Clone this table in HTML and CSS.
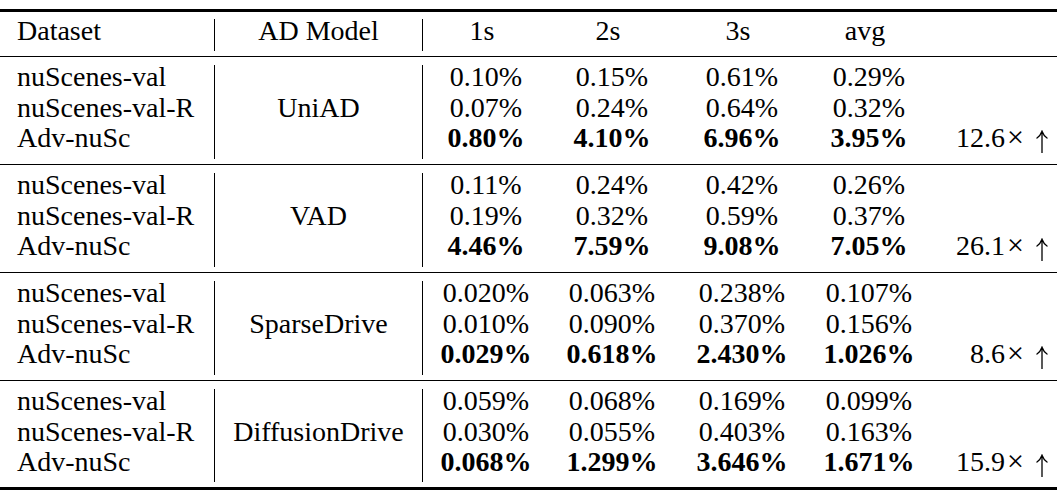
FILE: index.html
```html
<!DOCTYPE html>
<html>
<head>
<meta charset="utf-8">
<link rel="stylesheet" href="styles.css">
</head>
<body>
<div class="table">
  <div class="row head">
    <div class="cell c-ds">Dataset</div>
    <div class="sep"></div>
    <div class="cell c-model">AD Model</div>
    <div class="sep"></div>
    <div class="cell num">1s</div>
    <div class="cell num">2s</div>
    <div class="cell num">3s</div>
    <div class="cell num">avg</div>
    <div class="cell last"></div>
  </div>

  <div class="row group">
    <div class="cell c-ds"><div>nuScenes-val</div><div>nuScenes-val-R</div><div>Adv-nuSc</div></div>
    <div class="sep"></div>
    <div class="cell c-model">UniAD</div>
    <div class="sep"></div>
    <div class="cell num"><div>0.10%</div><div>0.07%</div><div class="b">0.80%</div></div>
    <div class="cell num"><div>0.15%</div><div>0.24%</div><div class="b">4.10%</div></div>
    <div class="cell num"><div>0.61%</div><div>0.64%</div><div class="b">6.96%</div></div>
    <div class="cell num"><div>0.29%</div><div>0.32%</div><div class="b">3.95%</div></div>
    <div class="cell last"><span>12.6<span class="times">×</span><svg class="up" viewBox="0 0 12 23" width="12" height="23"><path d="M6 1.5V23M1 8C3.2 6.4 5 4 6 1.2C7 4 8.8 6.4 11 8"/></svg></span></div>
  </div>

  <div class="row group">
    <div class="cell c-ds"><div>nuScenes-val</div><div>nuScenes-val-R</div><div>Adv-nuSc</div></div>
    <div class="sep"></div>
    <div class="cell c-model">VAD</div>
    <div class="sep"></div>
    <div class="cell num"><div>0.11%</div><div>0.19%</div><div class="b">4.46%</div></div>
    <div class="cell num"><div>0.24%</div><div>0.32%</div><div class="b">7.59%</div></div>
    <div class="cell num"><div>0.42%</div><div>0.59%</div><div class="b">9.08%</div></div>
    <div class="cell num"><div>0.26%</div><div>0.37%</div><div class="b">7.05%</div></div>
    <div class="cell last"><span>26.1<span class="times">×</span><svg class="up" viewBox="0 0 12 23" width="12" height="23"><path d="M6 1.5V23M1 8C3.2 6.4 5 4 6 1.2C7 4 8.8 6.4 11 8"/></svg></span></div>
  </div>

  <div class="row group">
    <div class="cell c-ds"><div>nuScenes-val</div><div>nuScenes-val-R</div><div>Adv-nuSc</div></div>
    <div class="sep"></div>
    <div class="cell c-model">SparseDrive</div>
    <div class="sep"></div>
    <div class="cell num"><div>0.020%</div><div>0.010%</div><div class="b">0.029%</div></div>
    <div class="cell num"><div>0.063%</div><div>0.090%</div><div class="b">0.618%</div></div>
    <div class="cell num"><div>0.238%</div><div>0.370%</div><div class="b">2.430%</div></div>
    <div class="cell num"><div>0.107%</div><div>0.156%</div><div class="b">1.026%</div></div>
    <div class="cell last"><span>8.6<span class="times">×</span><svg class="up" viewBox="0 0 12 23" width="12" height="23"><path d="M6 1.5V23M1 8C3.2 6.4 5 4 6 1.2C7 4 8.8 6.4 11 8"/></svg></span></div>
  </div>

  <div class="row group final">
    <div class="cell c-ds"><div>nuScenes-val</div><div>nuScenes-val-R</div><div>Adv-nuSc</div></div>
    <div class="sep"></div>
    <div class="cell c-model">DiffusionDrive</div>
    <div class="sep"></div>
    <div class="cell num"><div>0.059%</div><div>0.030%</div><div class="b">0.068%</div></div>
    <div class="cell num"><div>0.068%</div><div>0.055%</div><div class="b">1.299%</div></div>
    <div class="cell num"><div>0.169%</div><div>0.403%</div><div class="b">3.646%</div></div>
    <div class="cell num"><div>0.099%</div><div>0.163%</div><div class="b">1.671%</div></div>
    <div class="cell last"><span>15.9<span class="times">×</span><svg class="up" viewBox="0 0 12 23" width="12" height="23"><path d="M6 1.5V23M1 8C3.2 6.4 5 4 6 1.2C7 4 8.8 6.4 11 8"/></svg></span></div>
  </div>
</div>
</body>
</html>
```

FILE: styles.css
```css
html, body {
  margin: 0;
  padding: 0;
  background: #fff;
}

body {
  font-family: "Liberation Serif", "Times New Roman", serif;
  font-size: 28px;
  line-height: 30.5px;
  color: #000;
}

.table {
  margin-top: 9px;
  width: 1057px;
  border-top: 3px solid #000;
}

.row {
  display: grid;
  grid-template-columns: 214px 1px 207px 1px 126px 126px 134px 120px 1fr;
  border-bottom: 1px solid #000;
}

.row.final {
  border-bottom: 3px solid #000;
}

.cell {
  padding: 5.5px 0 10px;
  white-space: nowrap;
}

.head .cell {
  padding-top: 4.3px;
  padding-bottom: 9.2px;
}

.final .cell {
  padding-bottom: 9px;
}

.sep {
  background: #000;
  margin: 8px 0 5px;
}

.head .sep {
  margin: 7px 0 5px;
}

.row .c-ds {
  padding-left: 17px;
}

.c-model {
  display: flex;
  align-items: center;
  justify-content: center;
}

.num {
  text-align: center;
}

.head .num {
  padding-right: 8px;
}

.b {
  font-weight: bold;
}

.last {
  display: flex;
  flex-direction: column;
  justify-content: flex-end;
  align-items: flex-end;
  padding-right: 9px;
}

.times {
  display: inline-block;
  margin-left: 2px;
  font-size: 30px;
}

.up {
  display: inline-block;
  margin-left: 12px;
  vertical-align: -6px;
  fill: none;
  stroke: #000;
  stroke-width: 1.3;
  stroke-linecap: round;
}
```
